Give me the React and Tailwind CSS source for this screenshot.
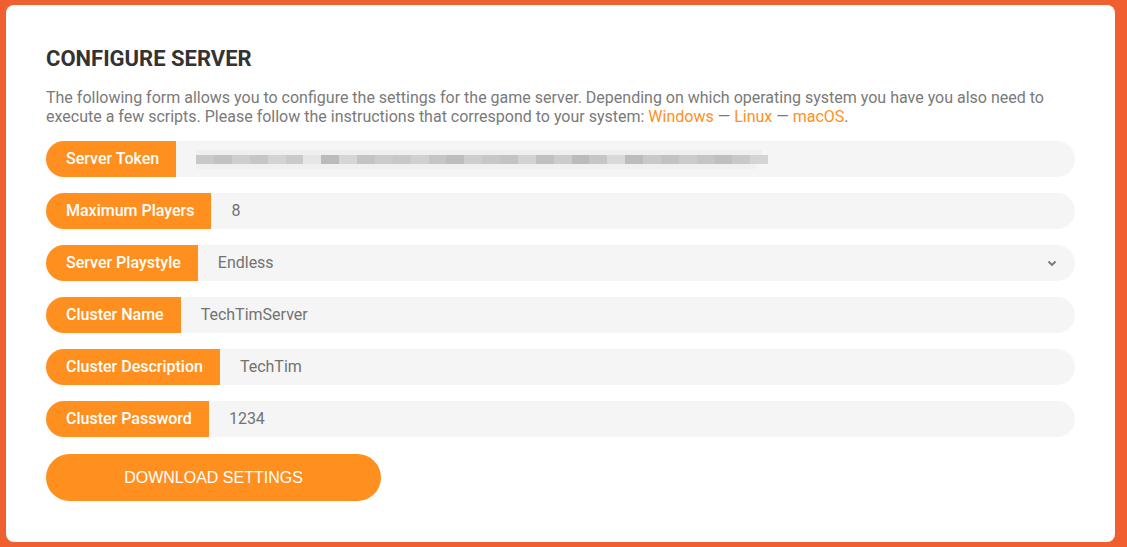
import { useState } from "react";

const fields = [
  { label: "Server Token", value: null },
  { label: "Maximum Players", value: "8" },
  { label: "Server Playstyle", value: "Endless", select: true },
  { label: "Cluster Name", value: "TechTimServer" },
  { label: "Cluster Description", value: "TechTim" },
  { label: "Cluster Password", value: "1234" },
];

// pixelated gray blocks standing in for the hidden token
const tokenShades = [
  "#c9c9c9", "#c2c2c2", "#cecece", "#c6c6c6", "#d3d3d3", "#cacaca", "#e6e6e6", "#bbbbbb",
  "#d6d6d6", "#c4c4c4", "#cbcbcb", "#c8c8c8", "#d0d0d0", "#c5c5c5", "#bdbdbd", "#cdcdcd",
  "#c7c7c7", "#c3c3c3", "#d2d2d2", "#c0c0c0", "#cccccc", "#bbbbbb", "#c6c6c6", "#d9d9d9",
  "#bcbcbc", "#c9c9c9", "#c2c2c2", "#cbcbcb", "#c5c5c5", "#bfbfbf", "#c8c8c8", "#d4d4d4",
];

function Token() {
  return (
    <div className="flex flex-col blur-[0.6px]">
      <div className="h-[5px] w-[566px] bg-[#efefef]" />
      <div className="flex h-[9px] w-[572px]">
        {tokenShades.map((c, i) => (
          <div key={i} className="h-full flex-1" style={{ backgroundColor: c }} />
        ))}
      </div>
      <div className="h-[5px] w-[560px] bg-[#f0f0f0]" />
    </div>
  );
}

function Row({ field }) {
  const [val, setVal] = useState(field.value);
  return (
    <div className="flex h-9 w-full">
      <div className="flex items-center whitespace-nowrap rounded-l-full bg-[#ff9020] pl-5 pr-[17px] text-[16px] font-medium text-white">
        {field.label}
      </div>
      <div className="flex flex-1 items-center rounded-r-full bg-[#f5f5f5] pl-5 pr-4 text-[16px] text-[#727272]">
        {field.value === null ? (
          <Token />
        ) : field.select ? (
          <div className="flex w-full items-center justify-between">
            <span>{val}</span>
            <svg width="12" height="12" viewBox="0 0 12 12" className="mr-[1px]">
              <path d="M2.5 4.5 L6 8 L9.5 4.5" fill="none" stroke="#777" strokeWidth="1.8" />
            </svg>
          </div>
        ) : (
          <input
            className="w-full bg-transparent outline-none"
            value={val}
            onChange={(e) => setVal(e.target.value)}
          />
        )}
      </div>
    </div>
  );
}

export default function App() {
  return (
    <div className="min-h-[547px] bg-[#ef5f30] pl-[6px] pr-3 pt-[5px] pb-[6px] font-['Roboto',sans-serif]">
      <div className="rounded-lg bg-white px-10 pt-10 pb-[41px]">
        <h1 className="text-[22px] font-bold leading-7 text-[#333]">CONFIGURE SERVER</h1>
        <p className="mt-[15px] text-[16px] leading-[19px] text-[#7a7a7a]">
          The following form allows you to configure the settings for the game server. Depending on which
          operating system you have you also need to execute a few scripts. Please follow the instructions
          that correspond to your system: <span className="text-[#ff9020]">Windows</span> —{" "}
          <span className="text-[#ff9020]">Linux</span> — <span className="text-[#ff9020]">macOS</span>.
        </p>
        <div className="mt-[15px] flex flex-col gap-4">
          {fields.map((f) => (
            <Row key={f.label} field={f} />
          ))}
        </div>
        <button className="mt-[17px] h-[47px] w-[335px] rounded-full bg-[#ff9020] font-['Liberation_Sans',sans-serif] text-[16px] text-white">
          DOWNLOAD SETTINGS
        </button>
      </div>
    </div>
  );
}
